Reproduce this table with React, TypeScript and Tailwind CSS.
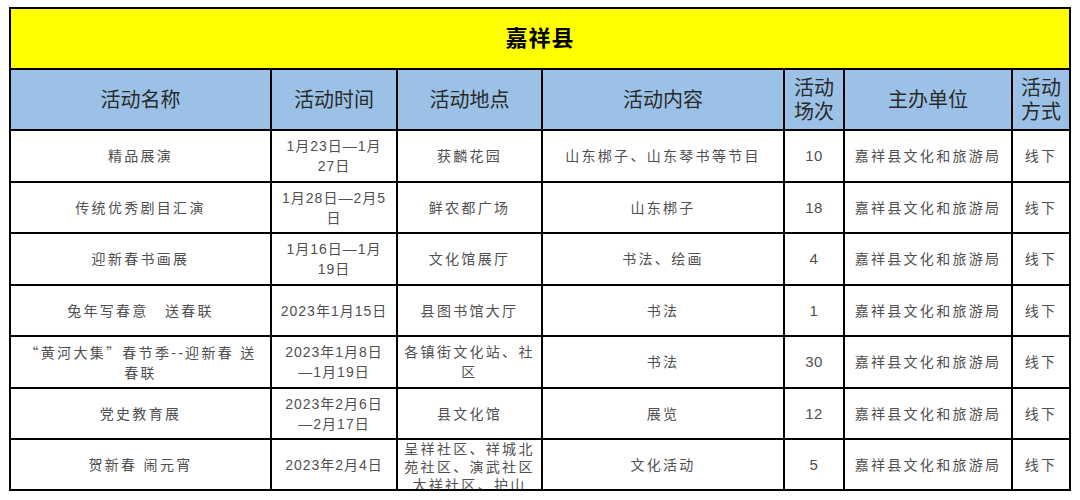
import type { ReactNode } from "react"

const cols = "grid-cols-[261px_126px_145px_242px_60px_168px_58px]"

type Row = {
  name: ReactNode
  time: ReactNode
  place: ReactNode
  content: string
  count: string
  h: string
  placeTop?: boolean
}

const rows: Row[] = [
  {
    name: "精品展演",
    time: <>1月23日—1月<br />27日</>,
    place: "获麟花园",
    content: "山东梆子、山东琴书等节目",
    count: "10",
    h: "h-[52px]",
  },
  {
    name: "传统优秀剧目汇演",
    time: <>1月28日—2月5<br />日</>,
    place: "鲜农都广场",
    content: "山东梆子",
    count: "18",
    h: "h-[51px]",
  },
  {
    name: "迎新春书画展",
    time: <>1月16日—1月<br />19日</>,
    place: "文化馆展厅",
    content: "书法、绘画",
    count: "4",
    h: "h-[52px]",
  },
  {
    name: "兔年写春意\u3000送春联",
    time: "2023年1月15日",
    place: "县图书馆大厅",
    content: "书法",
    count: "1",
    h: "h-[51px]",
  },
  {
    name: (
      <>
        <span className="font-['Noto_Sans_CJK_SC',sans-serif]">“黄河大集”春节季</span>--迎新春 送
        <br />
        春联
      </>
    ),
    time: <>2023年1月8日<br />—1月19日</>,
    place: <>各镇街文化站、社<br />区</>,
    content: "书法",
    count: "30",
    h: "h-[52px]",
  },
  {
    name: "党史教育展",
    time: <>2023年2月6日<br />—2月17日</>,
    place: "县文化馆",
    content: "展览",
    count: "12",
    h: "h-[51px]",
  },
  {
    name: "贺新春 闹元宵",
    time: "2023年2月4日",
    place: <>呈祥社区、祥城北<br />苑社区、演武社区<br />大祥社区、护山<br />社区</>,
    content: "文化活动",
    count: "5",
    h: "h-[51px]",
    placeTop: true,
  },
]

function Cell({ children, top, tight }: { children: ReactNode; top?: boolean; tight?: boolean }) {
  return (
    <div
      className={`flex justify-center overflow-hidden border-r-2 border-b-2 border-black px-1 text-center ${
        top ? "items-start" : "items-center"
      } ${tight ? "leading-[18px]" : "leading-[20px]"}`}
    >
      <div>{children}</div>
    </div>
  )
}

function HeadCell({ children }: { children: ReactNode }) {
  return (
    <div className="flex items-center justify-center border-r-2 border-b-2 border-black text-center text-[20px] leading-[24px] text-[#2a2a2a]">
      {children}
    </div>
  )
}

export default function App() {
  return (
    <div className="h-[500px] w-[1080px] bg-white pt-[7px] pl-[9px] font-['Liberation_Sans','Noto_Sans_CJK_SC',sans-serif]">
      <div className="w-[1062px] border-t-2 border-l-2 border-black">
        <div className="flex h-[61px] items-center justify-center border-r-2 border-b-2 border-black bg-[#ffff00] text-[22px] font-bold tracking-[1px] text-black">
          嘉祥县
        </div>

        <div className={`grid h-[61px] ${cols} bg-[#9bc2e6]`}>
          <HeadCell>活动名称</HeadCell>
          <HeadCell>活动时间</HeadCell>
          <HeadCell>活动地点</HeadCell>
          <HeadCell>活动内容</HeadCell>
          <HeadCell>
            活动
            <br />
            场次
          </HeadCell>
          <HeadCell>主办单位</HeadCell>
          <HeadCell>
            活动
            <br />
            方式
          </HeadCell>
        </div>

        {rows.map((row, i) => (
          <div
            key={i}
            className={`grid ${row.h} ${cols} text-[14px] tracking-[2.3px] text-[#505050]`}
          >
            <Cell>{row.name}</Cell>
            <Cell>
              <span className="tracking-[1px]">{row.time}</span>
            </Cell>
            <Cell top={row.placeTop} tight={row.placeTop}>
              {row.place}
            </Cell>
            <Cell>{row.content}</Cell>
            <Cell>
              <span className="text-[15px] tracking-[0.5px]">{row.count}</span>
            </Cell>
            <Cell>嘉祥县文化和旅游局</Cell>
            <Cell>线下</Cell>
          </div>
        ))}
      </div>
    </div>
  )
}
